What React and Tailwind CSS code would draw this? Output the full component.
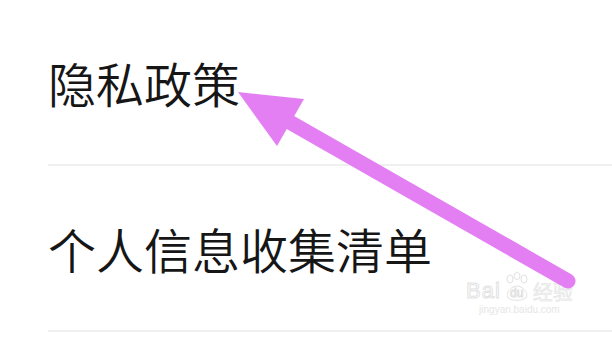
const items = ["隐私政策", "个人信息收集清单"];

const Watermark = () => (
  <div className="absolute left-[466px] top-[272px] flex flex-col items-center text-white [-webkit-text-stroke:1px_#e2e2e2]">
    <div className="flex items-end leading-none font-['Liberation_Sans',sans-serif]">
      <span className="text-[22px] tracking-[1px]">Bai</span>
      <span className="relative mx-[1px] flex h-[30px] w-[30px] items-end justify-center">
        <svg viewBox="0 0 30 30" className="absolute inset-0" fill="none" stroke="#e2e2e2" strokeWidth="1">
          <ellipse cx="8" cy="7" rx="3" ry="4" />
          <ellipse cx="15" cy="4" rx="3" ry="3.5" />
          <ellipse cx="22" cy="7" rx="3" ry="4" />
          <path d="M6 26 C3 20 10 14 15 14 C20 14 27 20 24 26 C20 29 10 29 6 26 Z" />
        </svg>
        <span className="relative pb-[3px] text-[12px]">du</span>
      </span>
      <span className="text-[20px] text-[#f4f4f4] [-webkit-text-stroke:0.5px_#e2e2e2] font-['Noto_Sans_CJK_SC',sans-serif]">经验</span>
    </div>
    <div className="mt-[3px] text-[10px] leading-none text-[#e6e6e6] [-webkit-text-stroke:0px] font-['Liberation_Sans',sans-serif]">
      jingyan.baidu.com
    </div>
  </div>
);

const Arrow = () => (
  <svg className="absolute inset-0" width="612" height="340" viewBox="0 0 612 340">
    <line x1="286" y1="120" x2="568" y2="281" stroke="#e37ff2" strokeWidth="15" strokeLinecap="round" />
    <polygon points="238,92 304,99 277,146" fill="#e37ff2" />
  </svg>
);

export default function App() {
  return (
    <div className="relative h-[340px] w-[612px] overflow-hidden bg-white font-['Noto_Sans_CJK_SC','Noto_Sans',sans-serif]">
      <div className="pl-[48px]">
        {items.map((label) => (
          <div
            key={label}
            className="flex h-[166px] items-center border-b-2 border-[#f0f0f0] pb-[1px]"
          >
            <span className="text-[48px] font-[350] leading-none text-[#161616]">{label}</span>
          </div>
        ))}
      </div>
      <Watermark />
      <Arrow />
    </div>
  );
}
